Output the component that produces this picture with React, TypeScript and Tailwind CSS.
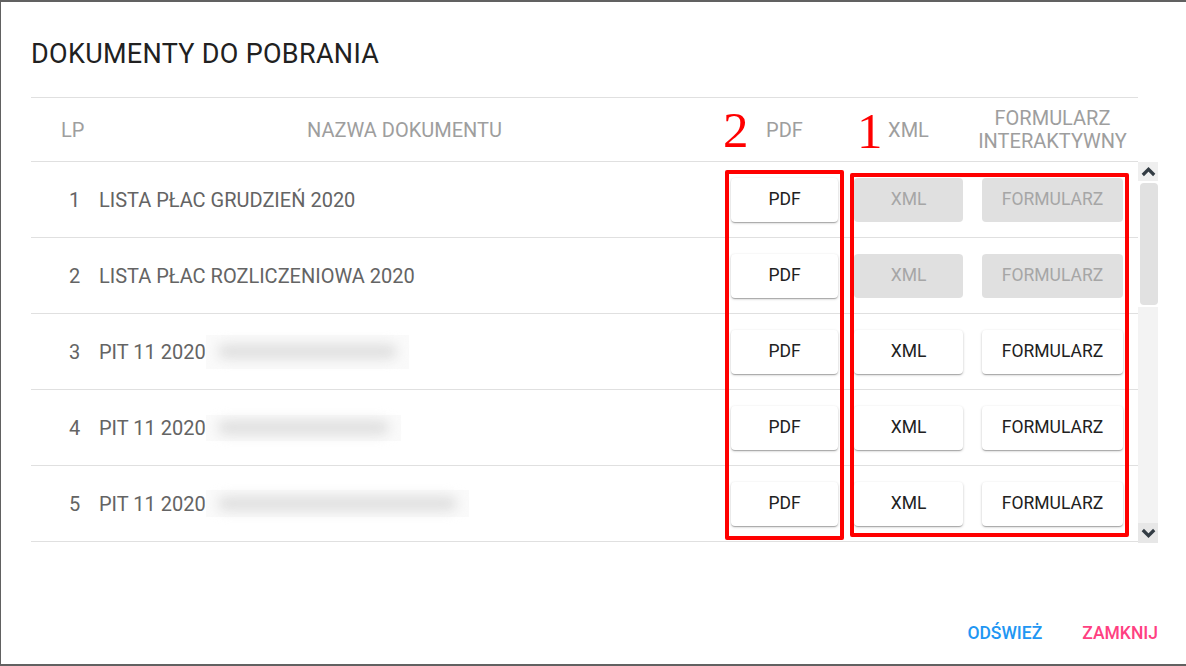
import React from 'react';

type Doc = { lp: number; name: string; blur?: [number, number]; xml: boolean };

const docs: Doc[] = [
  { lp: 1, name: 'LISTA PŁAC GRUDZIEŃ 2020', xml: false },
  { lp: 2, name: 'LISTA PŁAC ROZLICZENIOWA 2020', xml: false },
  { lp: 3, name: 'PIT 11 2020', blur: [203, 34], xml: true },
  { lp: 4, name: 'PIT 11 2020', blur: [195, 26], xml: true },
  { lp: 5, name: 'PIT 11 2020', blur: [263, 27], xml: true },
];

const raised =
  'bg-white text-[#212121] shadow-[0_1px_3px_rgba(0,0,0,0.2),0_1px_1px_rgba(0,0,0,0.14),0_2px_1px_-1px_rgba(0,0,0,0.12)]';
const disabled = 'bg-[#e0e0e0] text-[#a6a6a6]';

const Chevron: React.FC<{ up?: boolean }> = ({ up }) => (
  <svg width="15" height="10" viewBox="0 0 15 10" className={up ? '' : 'rotate-180'}>
    <path d="M1.8 8 L7.5 2.3 L13.2 8" fill="none" stroke="#333c44" strokeWidth="3.2" />
  </svg>
);

const Row: React.FC<{ doc: Doc }> = ({ doc }) => (
  <div className="flex items-center h-[76px] shrink-0 border-b border-[#e0e0e0] text-[20px] text-[#646464]">
    <div className="w-[68px] pl-[38px]">{doc.lp}</div>
    <div className="w-[611px] flex items-center">
      <span>{doc.name}</span>
      {doc.blur && (
        <span
          className="flex items-center px-[12px] bg-[#fafafa]"
          style={{ width: doc.blur[0], height: doc.blur[1] }}
        >
          <span className="block h-[15px] flex-1 rounded-full bg-[#e0e0e0] blur-[6px]" />
        </span>
      )}
    </div>
    <div className="w-[144px]">
      <button className={`ml-[21px] w-[107px] h-[44px] rounded-[4px] text-[17.5px] ${raised}`}>PDF</button>
    </div>
    <div className="w-[128px]">
      <button className={`w-[109px] h-[44px] rounded-[4px] text-[17.5px] ${doc.xml ? raised : disabled}`}>
        XML
      </button>
    </div>
    <div className="flex-1">
      <button className={`w-[141px] h-[44px] rounded-[4px] text-[17.5px] ${doc.xml ? raised : disabled}`}>
        FORMULARZ
      </button>
    </div>
  </div>
);

export default function App() {
  return (
    <div
      className="w-[1186px] h-[666px] bg-[#616161] pt-[2px] pl-[1px] pb-[2px] overflow-hidden"
      style={{ fontFamily: 'Roboto, "Liberation Sans", sans-serif' }}
    >
      <div className="relative h-[662px] bg-white pl-[30px] pr-[28px] pt-[36px] flex flex-col">
        <h2 className="text-[27px] leading-[32px] tracking-[0.3px] text-[#212121] font-normal">
          DOKUMENTY DO POBRANIA
        </h2>

        <div className="mt-[27px] w-[1107px] h-[65px] flex items-center border-y border-[#e0e0e0] text-[20px] text-[#9e9e9e]">
          <div className="w-[68px] pl-[30px]">LP</div>
          <div className="w-[611px] text-center">NAZWA DOKUMENTU</div>
          <div className="w-[144px]">
            <div className="ml-[21px] w-[107px] text-center">PDF</div>
          </div>
          <div className="w-[128px]">
            <div className="w-[109px] text-center">XML</div>
          </div>
          <div className="flex-1">
            <div className="w-[141px] text-center leading-[23px] whitespace-nowrap flex flex-col items-center">
              <span>FORMULARZ</span>
              <span>INTERAKTYWNY</span>
            </div>
          </div>
        </div>

        <div className="flex h-[381px]">
          <div className="w-[1107px] flex flex-col overflow-hidden">
            {docs.map((d) => (
              <Row key={d.lp} doc={d} />
            ))}
          </div>
          <div className="w-[20px] flex flex-col">
            <div className="h-[19px] bg-[#efefef] flex items-center justify-center">
              <Chevron up />
            </div>
            <div className="h-[126px] pl-[2px] pt-[2px] pb-[2px]">
              <div className="h-full rounded-[4px] bg-[#e1e1e1]" />
            </div>
            <div className="flex-1 bg-[#f3f3f3]" />
            <div className="h-[20px] bg-[#e7e7e7] flex items-center justify-center">
              <Chevron />
            </div>
          </div>
        </div>

        <div className="mt-[78px] flex justify-end gap-[40px] text-[17.5px] font-medium leading-[24px]">
          <button className="text-[#2196f3]">ODŚWIEŻ</button>
          <button className="text-[#ff4081]">ZAMKNIJ</button>
        </div>

        {/* red annotations drawn over the table */}
        <div className="absolute left-[724px] top-[168px] w-[119px] h-[370px] border-[4px] border-[#ff0000] rounded-[2px]" />
        <div className="absolute left-[849px] top-[171px] w-[279px] h-[364px] border-[4px] border-[#ff0000] rounded-[2px]" />
        <span
          className="absolute left-[722px] top-[103px] text-[51px] leading-none text-[#ff0000]"
          style={{ fontFamily: '"Liberation Serif", serif' }}
        >
          2
        </span>
        <span
          className="absolute left-[856px] top-[104px] text-[51px] leading-none text-[#ff0000]"
          style={{ fontFamily: '"Liberation Serif", serif' }}
        >
          1
        </span>
      </div>
    </div>
  );
}
